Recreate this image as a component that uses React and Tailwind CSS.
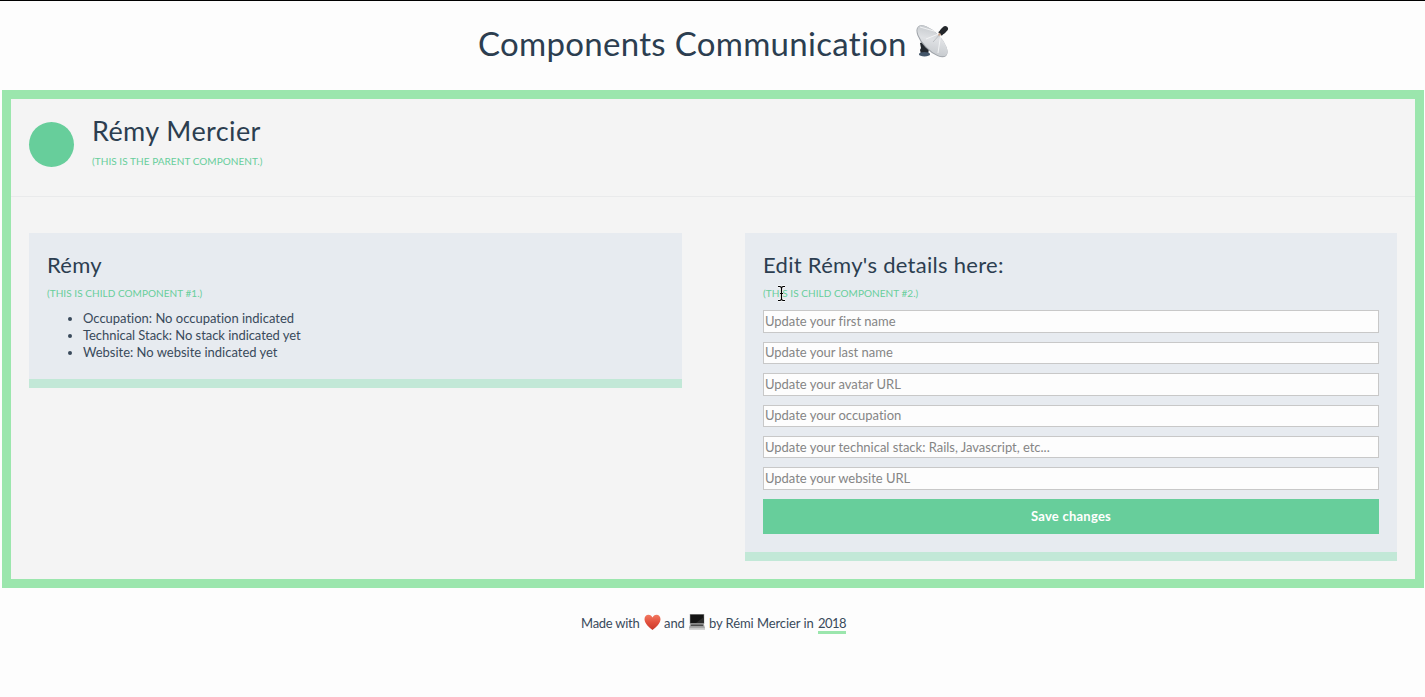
import React from "react";

const fields = [
  { label: "Update your first name", h: "h-[23px] pb-[2px]" },
  { label: "Update your last name", h: "h-[22px] pb-[2px]" },
  { label: "Update your avatar URL", h: "h-[23px] pb-[2px]" },
  { label: "Update your occupation", h: "h-[22px] pb-[2px]" },
  { label: "Update your technical stack: Rails, Javascript, etc...", h: "h-[22px]" },
  { label: "Update your website URL", h: "h-[23px] pb-[2px]" },
];

function Dish() {
  return (
    <svg className="ml-[8px] mt-px h-[34px] w-[34px] shrink-0" viewBox="0 0 34 34">
      <defs>
        <linearGradient id="dish" x1="0" y1="0.2" x2="1" y2="0.8">
          <stop offset="0" stopColor="#c3c7cb" />
          <stop offset="0.45" stopColor="#dfe1e4" />
          <stop offset="1" stopColor="#c4c8cc" />
        </linearGradient>
      </defs>
      <path d="M5 19l3-1 6 7-1 5H6l-1-4 1-2z" fill="#23282e" />
      <ellipse cx="9.5" cy="30.2" rx="5.5" ry="2.3" fill="#43566a" />
      <ellipse cx="17" cy="17.3" rx="20.3" ry="9" transform="rotate(46 17 17.3)" fill="#9da2a8" />
      <ellipse cx="17.4" cy="16.9" rx="19.8" ry="8.500" transform="rotate(46 17.4 16.9)" fill="url(#dish)" />
      <path d="M26 9L11 15M26 9l-3 20M26 9L5 3" stroke="#f4f5f6" strokeWidth="0.9" fill="none" />
      <path d="M26 9l-8 9" stroke="#a5a9ad" strokeWidth="0.6" />
      <path d="M25 10l4-4" stroke="#24272b" strokeWidth="5" />
      <path d="M28 7l2.200-2.200" stroke="#24272b" strokeWidth="5.500" strokeLinecap="round" />
      <circle cx="24.5" cy="10.5" r="1.3" fill="#c9a48c" />
    </svg>
  );
}

function Heart() {
  return (
    <svg className="ml-[4px] mr-[3px] mt-px h-[16px] w-[17px] shrink-0" viewBox="0 0 17 16">
      <defs>
        <linearGradient id="heart" x1="0" y1="0" x2="0" y2="1">
          <stop offset="0" stopColor="#f27a62" />
          <stop offset="0.5" stopColor="#e2503d" />
          <stop offset="1" stopColor="#c9382a" />
        </linearGradient>
      </defs>
      <path d="M8.500 15.900C5.500 13.500.700 9.900.500 5.200.400 2.500 2.200.700 4.500.700c1.800 0 3.300 1.200 4 2.800.7-1.600 2.200-2.800 4-2.800 2.300 0 4.100 1.800 4 4.500-.2 4.700-5 8.300-8 10.700z" fill="url(#heart)" />
    </svg>
  );
}

function Laptop() {
  return (
    <svg className="ml-[4px] mr-[4px] mt-px h-[16px] w-[16px] shrink-0" viewBox="0 0 16 16">
      <path d="M.800 0h14.400v10H.800z" fill="#8a8a8a" />
      <path d="M1.300.700h13.400V9H1.300z" fill="#141414" />
      <path d="M7 9l7.700-6v6z" fill="#2c2c2c" />
      <path d="M1.200 10h13.600l1.200 4H0z" fill="#a0a0a0" />
      <path d="M2.200 10.500h11.600l.5 1.500H1.700z" fill="#4c4c4c" />
      <path d="M0 13.800h16v2H0z" fill="#c9c9c9" />
    </svg>
  );
}

function PointerBeam() {
  return (
    <svg className="absolute left-[14px] -top-px h-[17px] w-[9px]" viewBox="0 0 9 17">
      <path d="M1 1.500h2l1.500 1 1.500-1h2M4.500 2.500v12M1 15.500h2l1.500-1 1.500 1h2M3 8.500h3" stroke="#fff" strokeWidth="2.600" fill="none" />
      <path d="M1 1.500h2l1.500 1 1.500-1h2M4.500 2.500v12M1 15.500h2l1.500-1 1.500 1h2M3 8.500h3" stroke="#000" strokeWidth="1.200" fill="none" />
    </svg>
  );
}

export default function App() {
  return (
    <div className="flex h-[697px] w-[1425px] flex-col border-t border-black bg-[#fdfdfd] font-['Lato',sans-serif] text-[#2c3e50]">
      <h1 className="flex h-[89px] items-start whitespace-nowrap pl-[478px] pt-[22px] text-[33px] leading-[40px]">
        <span className="w-[429px] tracking-[0.3px]">Components Communication</span>
        <Dish />
      </h1>

      <main className="ml-[2px] h-[498px] w-[1422px] border-[9px] border-[#9be6ad] bg-[#f4f4f4]">
        <header className="flex h-[98px] border-b border-[#e9eaeb] pl-[18px]">
          <div className="mt-[23px] h-[45px] w-[45px] rounded-full bg-[#67ce9b]" />
          <div className="ml-[18px] whitespace-nowrap pt-[16px]">
            <h2 className="text-[27px] leading-[32px] tracking-[0.4px]">Rémy Mercier</h2>
            <p className="mt-[7px] text-[10px] leading-[14px] tracking-[0.06px] text-[#67ce9b]">(THIS IS THE PARENT COMPONENT.)</p>
          </div>
        </header>

        <div className="flex items-start gap-[63px] pl-[18px] pt-[36px]">
          <section className="h-[155px] w-[653px] whitespace-nowrap border-b-[9px] border-[#c2e8d7] bg-[#e7ebf0] px-[18px] pt-[17px]">
            <h3 className="text-[22px] leading-[30px] tracking-[0.27px]">Rémy</h3>
            <p className="mt-[6px] text-[10px] leading-[14px] tracking-[0.05px] text-[#67ce9b]">(THIS IS CHILD COMPONENT #1.)</p>
            <ul className="mt-[10px] list-disc pl-[36px] text-[13px] leading-[17px] tracking-[-0.01px] text-[#394a5b]">
              <li>Occupation: No occupation indicated</li>
              <li className="tracking-[-0.05px]">Technical Stack: No stack indicated yet</li>
              <li>Website: No website indicated yet</li>
            </ul>
          </section>

          <section className="h-[328px] w-[652px] whitespace-nowrap border-b-[9px] border-[#c2e8d7] bg-[#e7ebf0] px-[18px] pt-[17px]">
            <h3 className="text-[22px] leading-[30px] tracking-[0.29px]">Edit Rémy's details here:</h3>
            <div className="relative mt-[6px]">
              <p className="text-[10px] leading-[14px] tracking-[0.05px] text-[#67ce9b]">(THIS IS CHILD COMPONENT #2.)</p>
              <PointerBeam />
            </div>
            <form className="mt-[10px] flex flex-col gap-[9px]">
              {fields.map((f) => (
                <input
                  key={f.label}
                  placeholder={f.label}
                  className={`${f.h} w-full border border-[#c8c8c8] bg-[#fdfdfd] px-px text-[13px] tracking-[-0.02px] placeholder:text-[#858585]`}
                />
              ))}
              <button type="button" className="h-[35px] w-full bg-[#67ce9b] text-[13px] font-bold tracking-[0.25px] text-white">
                Save changes
              </button>
            </form>
          </section>
        </div>
      </main>

      <footer className="mt-[25px] flex h-[22px] items-start whitespace-nowrap pl-[581px] text-[13px] leading-[20px] tracking-[-0.08px] text-[#394a5b]">
        <span className="w-[59px] tracking-[-0.25px]">Made with</span>
        <Heart />
        <span className="w-[21px]">and</span>
        <Laptop />
        <span className="w-[105px]">by Rémi Mercier in</span>
        <span className="ml-[4px] h-[21px] w-[28px] border-b-[3px] border-[#9be6ad] tracking-[-0.5px]">2018</span>
      </footer>
    </div>
  );
}
